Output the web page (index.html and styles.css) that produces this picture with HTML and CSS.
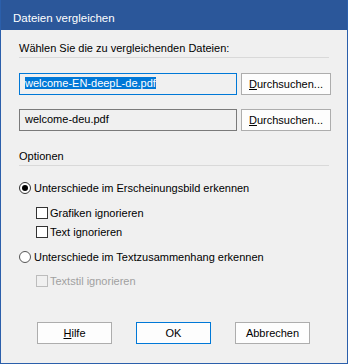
FILE: index.html
```html
<!DOCTYPE html>
<html>
<head>
    <title>Dateien vergleichen</title>
    <link rel="stylesheet" href="styles.css">
</head>
<body>
    <div class="dialog">
        <div class="titlebar">Dateien vergleichen</div>
        <div class="content">
            <div class="section-title">Wählen Sie die zu vergleichenden Dateien:</div>

            <div class="file-row first">
                <div class="file-box focused"><span class="selected">welcome-EN-deepL-de.pdf</span></div>
                <button class="btn browse"><u>D</u>urchsuchen...</button>
            </div>
            <div class="file-row">
                <div class="file-box">welcome-deu.pdf</div>
                <button class="btn browse"><u>D</u>urchsuchen...</button>
            </div>

            <div class="section-title options">Optionen</div>

            <div class="option radio-row first-radio">
                <span class="radio checked"></span>
                <span>Unterschiede im Erscheinungsbild erkennen</span>
            </div>
            <div class="option check-row grafiken">
                <span class="checkbox"></span>
                <span>Grafiken ignorieren</span>
            </div>
            <div class="option check-row text">
                <span class="checkbox"></span>
                <span>Text ignorieren</span>
            </div>
            <div class="option radio-row second-radio">
                <span class="radio"></span>
                <span>Unterschiede im Textzusammenhang erkennen</span>
            </div>
            <div class="option check-row disabled">
                <span class="checkbox"></span>
                <span>Textstil ignorieren</span>
            </div>

            <div class="buttons">
                <button class="btn"><u>H</u>ilfe</button>
                <button class="btn default">OK</button>
                <button class="btn">Abbrechen</button>
            </div>
        </div>
    </div>
</body>
</html>
```

FILE: styles.css
```css
body {
    margin: 0;
    font-family: "Liberation Sans", Arial, sans-serif;
    font-size: 11px;
    color: #000;
}
.dialog {
    width: 348px;
    height: 364px;
    box-sizing: border-box;
    border: 1px solid #2b5fab;
    border-top: none;
    background: #f0f0f0;
}
.titlebar {
    height: 30px;
    background: #2b579a;
    color: #fff;
    padding-left: 12px;
    line-height: 36px;
    font-size: 11.5px;
}
.content {
    padding: 11px 0 0 18px;
}
.section-title {
    width: 310px;
    line-height: 15px;
    padding-bottom: 1px;
    border-bottom: 1px solid #d9d9d9;
}
.section-title.options {
    margin-top: 18px;
}
.file-row {
    display: flex;
    gap: 4px;
    margin-top: 14px;
}
.file-row.first {
    margin-top: 15px;
}
.file-box {
    width: 218px;
    height: 22px;
    box-sizing: border-box;
    border: 1px solid #7a7a7a;
    background: #f0f0f0;
    padding-left: 5px;
    line-height: 19px;
}
.file-box.focused {
    border-color: #0078d7;
}
.selected {
    background: #0078d7;
    color: #fff;
    display: inline-block;
    line-height: 12px;
}
.btn {
    font-family: inherit;
    font-size: 11px;
    color: #000;
    width: 75px;
    height: 22px;
    box-sizing: border-box;
    border: 1px solid #adadad;
    background: #fdfdfd;
    padding: 0;
    margin: 0;
}
.btn.browse {
    width: 90px;
}
.btn.default {
    border-color: #0078d7;
}
.option {
    display: flex;
    align-items: center;
    height: 15px;
}
.radio-row {
    gap: 3px;
}
.check-row {
    gap: 2px;
    padding-left: 17px;
}
.first-radio {
    margin-top: 14px;
}
.grafiken {
    margin-top: 10px;
}
.text {
    margin-top: 4px;
}
.second-radio {
    margin-top: 10px;
}
.disabled {
    margin-top: 9px;
    color: #a0a0a0;
}
.radio {
    width: 12px;
    height: 12px;
    box-sizing: border-box;
    border: 1px solid #333;
    border-radius: 50%;
    background: #fff;
    display: flex;
    align-items: center;
    justify-content: center;
}
.radio.checked::after {
    content: "";
    width: 6px;
    height: 6px;
    border-radius: 50%;
    background: #000;
}
.second-radio .radio {
    border-color: #555;
}
.checkbox {
    width: 12px;
    height: 12px;
    box-sizing: border-box;
    border: 1px solid #333;
    background: #fff;
}
.disabled .checkbox {
    border-color: #bcbcbc;
    background: #f0f0f0;
}
.buttons {
    display: flex;
    gap: 24px;
    padding-left: 18px;
    margin-top: 34px;
}
```
